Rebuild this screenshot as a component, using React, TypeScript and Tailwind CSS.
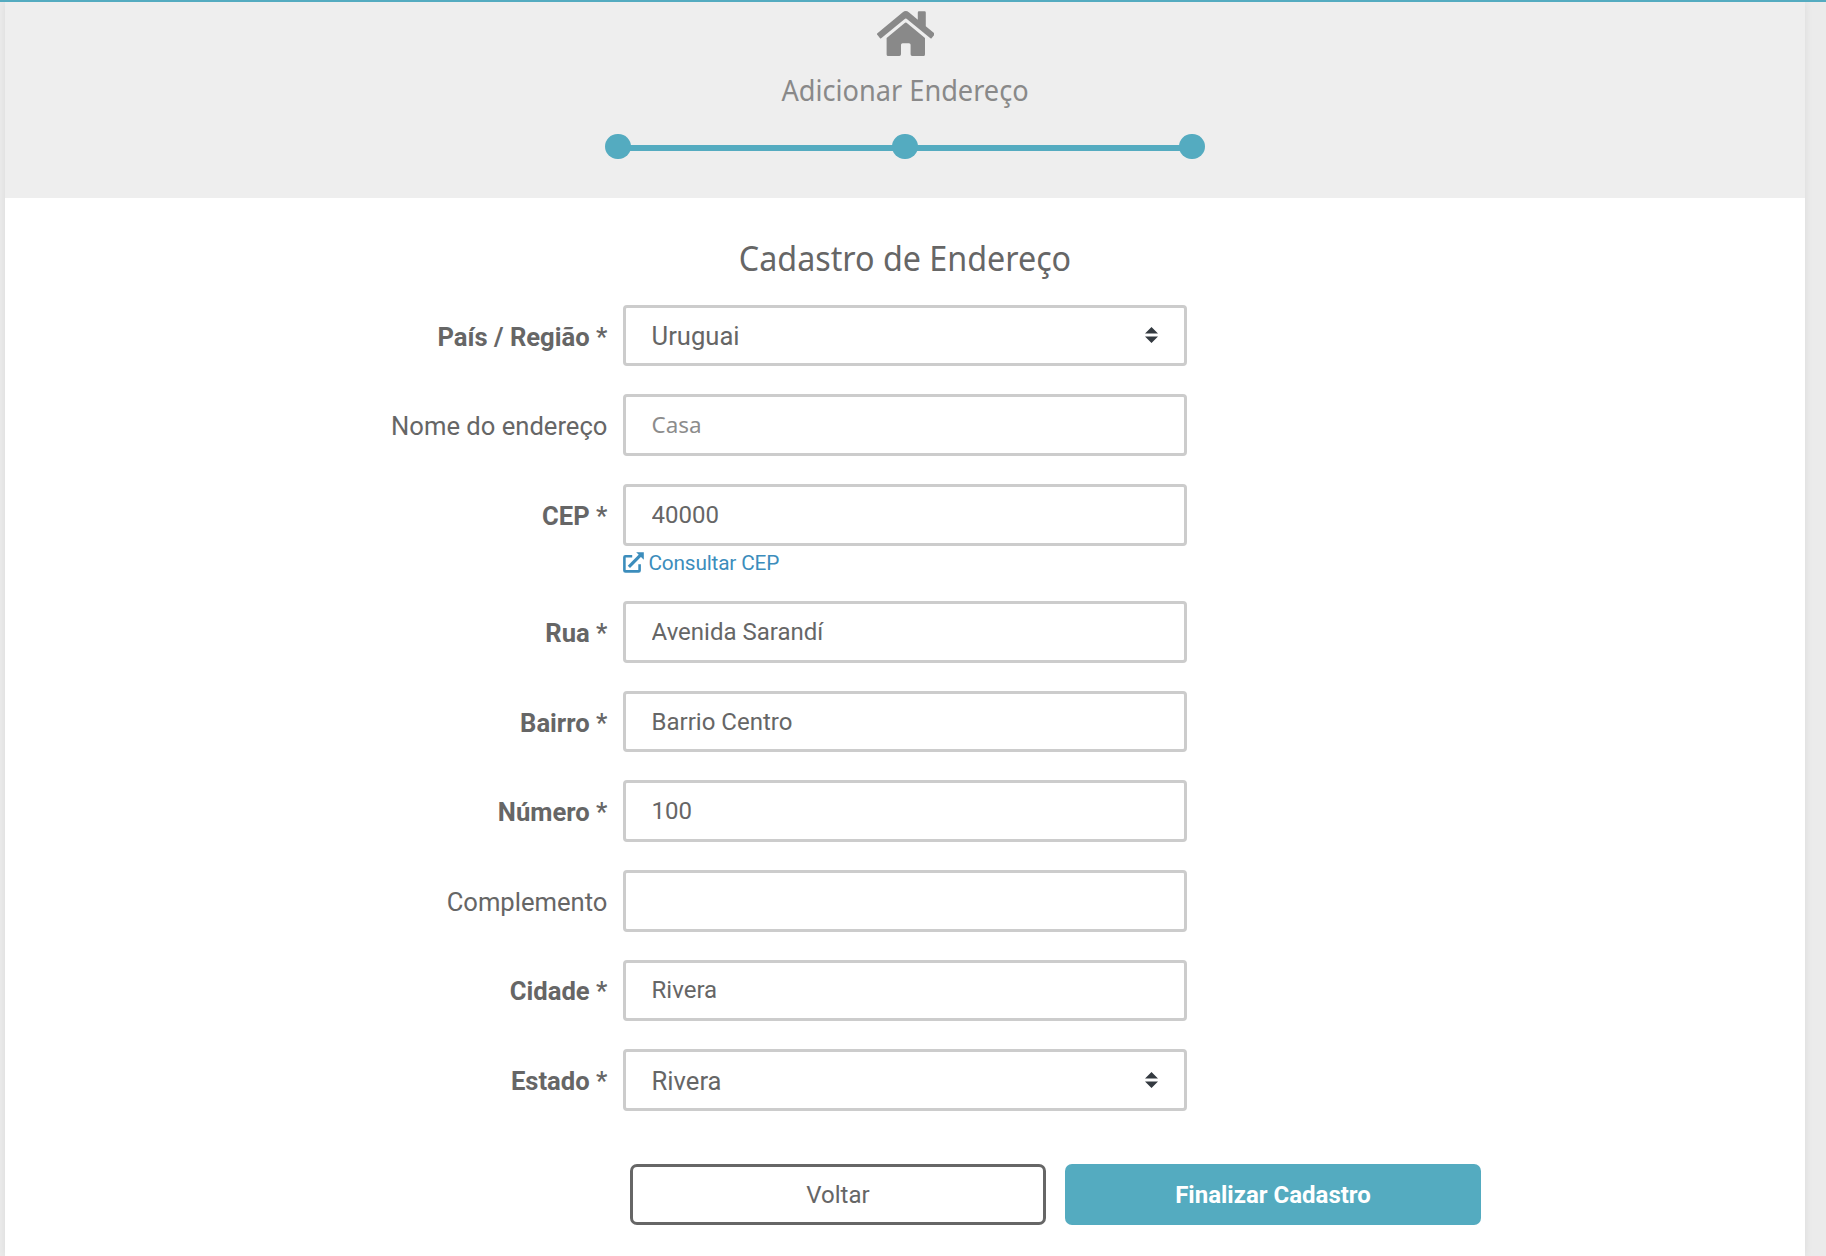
import React, { useState } from "react";
import { FaHome } from "react-icons/fa";

type Field = {
  name: string;
  label: string;
  required?: boolean;
  placeholder?: string;
  options?: string[];
  lookup?: boolean;
};

const fields: Field[] = [
  { name: "country", label: "País / Região", required: true, options: ["Uruguai"] },
  { name: "title", label: "Nome do endereço", placeholder: "Casa" },
  { name: "zip", label: "CEP", required: true, lookup: true },
  { name: "street", label: "Rua", required: true },
  { name: "district", label: "Bairro", required: true },
  { name: "number", label: "Número", required: true },
  { name: "complement", label: "Complemento" },
  { name: "city", label: "Cidade", required: true },
  { name: "state", label: "Estado", required: true, options: ["Rivera"] },
];

const SelectArrow = () => (
  <svg
    xmlns="http://www.w3.org/2000/svg"
    className="absolute right-[29px] top-[22.4px] h-[16px] w-[13px] pointer-events-none"
    viewBox="0 0 4 5"
    preserveAspectRatio="none"
    fill="#343a40"
  >
    <path d="M2 0L0 2h4zm0 5L0 3h4z" />
  </svg>
);

const ExternalLinkIcon = () => (
  <svg
    xmlns="http://www.w3.org/2000/svg"
    className="w-[21px] h-[21px]"
    viewBox="0 0 21 21"
    fill="none"
    stroke="currentColor"
    strokeWidth="2.6"
  >
    <path
      strokeLinejoin="round"
      d="M9.2 4.2H2.4a1 1 0 0 0-1 1v13.2a1 1 0 0 0 1 1h13.2a1 1 0 0 0 1-1v-6.2"
    />
    <path strokeWidth="3.2" d="M5.9 14.8L18 2.7" />
    <path stroke="none" fill="currentColor" d="M13.2 0.2H20.8V7.8Z" />
  </svg>
);

const Stepper = () => (
  <div className="flex items-center w-[600px]">
    <span className="h-[25px] w-[26px] shrink-0 rounded-full bg-[#54abc0]" />
    <span className="-mx-px mt-[3px] h-[6px] grow bg-[#54abc0]" />
    <span className="h-[25px] w-[26px] shrink-0 rounded-full bg-[#54abc0]" />
    <span className="-mx-px mt-[3px] h-[6px] grow bg-[#54abc0]" />
    <span className="h-[25px] w-[26px] shrink-0 rounded-full bg-[#54abc0]" />
  </div>
);

const App = () => {
  const [values, setValues] = useState<Record<string, string>>({
    country: "Uruguai",
    title: "",
    zip: "40000",
    street: "Avenida Sarandí",
    district: "Barrio Centro",
    number: "100",
    complement: "",
    city: "Rivera",
    state: "Rivera",
  });

  const handleChange = (
    e: React.ChangeEvent<HTMLInputElement | HTMLSelectElement>
  ) => {
    setValues({ ...values, [e.target.name]: e.target.value });
  };

  return (
    <div className="flex h-[1256px] w-[1826px] flex-col overflow-hidden bg-[#ebebeb] font-['Roboto',sans-serif] text-[#666]">
      <div className="z-10 h-[2px] shrink-0 bg-[#54abc0]" />
      <div className="ml-[5px] w-[1800px] grow bg-white shadow-[0_0_8px_rgba(0,0,0,0.07)]">
        <header className="flex h-[196px] flex-col items-center bg-[#eee] pt-[6px] text-[#898989]">
          <FaHome className="ml-px h-[51.2px] w-[57.6px]" />
          <p className="mt-[12px] h-[40px] scale-x-[0.943] font-['Noto_Sans',sans-serif] text-[28.8px] leading-[38px]">
            Adicionar Endereço
          </p>
          <div className="mt-[23px]">
            <Stepper />
          </div>
        </header>

        <form onSubmit={(e) => e.preventDefault()}>
          <h1 className="mt-[36px] h-[48px] scale-x-[0.938] text-center font-['Noto_Sans',sans-serif] text-[34.4px] leading-[48px]">
            Cadastro de Endereço
          </h1>

          <div className="mt-[22.8px] flex flex-col gap-[28px]">
            {fields.map((field) => (
              <div key={field.name} className="flex">
                <label
                  htmlFor={field.name}
                  className={`h-[61.6px] w-[602.4px] pt-[2.85px] text-right text-[25.6px] leading-[58.6px] ${
                    field.required ? "font-bold" : ""
                  }`}
                >
                  {field.label}
                  {field.required && <span className="font-medium"> *</span>}
                </label>
                <div className="ml-[15.6px] w-[564px]">
                  {field.options ? (
                    <div className="relative">
                      <select
                        id={field.name}
                        name={field.name}
                        value={values[field.name]}
                        onChange={handleChange}
                        className="block h-[61.6px] w-full appearance-none rounded-[4px] border-[3px] border-[#ccc] bg-white px-[25.6px] pt-[2px] text-[25.6px] outline-none"
                      >
                        {field.options.map((option) => (
                          <option key={option}>{option}</option>
                        ))}
                      </select>
                      <SelectArrow />
                    </div>
                  ) : (
                    <input
                      id={field.name}
                      name={field.name}
                      type="text"
                      value={values[field.name]}
                      placeholder={field.placeholder}
                      onChange={handleChange}
                      className="block h-[61.6px] w-full rounded-[4px] border-[3px] border-[#ccc] bg-white px-[25.6px] text-[24px] outline-none placeholder:font-['Noto_Sans',sans-serif] placeholder:text-[22.4px] placeholder:text-[#8c8c8c]"
                    />
                  )}
                  {field.lookup && (
                    <a
                      href="#"
                      className="flex h-[27.6px] items-center gap-[4.5px] pt-[6px] text-[20.8px] leading-[24px] tracking-[-0.18px] text-[#3c8dbc]"
                    >
                      <ExternalLinkIcon />
                      <span className="pt-[2px]">Consultar CEP</span>
                    </a>
                  )}
                </div>
              </div>
            ))}
          </div>

          <div className="ml-[625px] mt-[53.2px] flex gap-[19px]">
            <button
              type="button"
              className="h-[61px] w-[416px] rounded-[7px] border-[3px] border-[#666] bg-white pt-[2px] text-[24px]"
            >
              Voltar
            </button>
            <button
              type="submit"
              className="h-[61px] w-[416px] rounded-[7px] bg-[#54abc0] pt-[2px] text-[24px] font-bold text-white"
            >
              Finalizar Cadastro
            </button>
          </div>
        </form>
      </div>
    </div>
  );
};

export default App;
